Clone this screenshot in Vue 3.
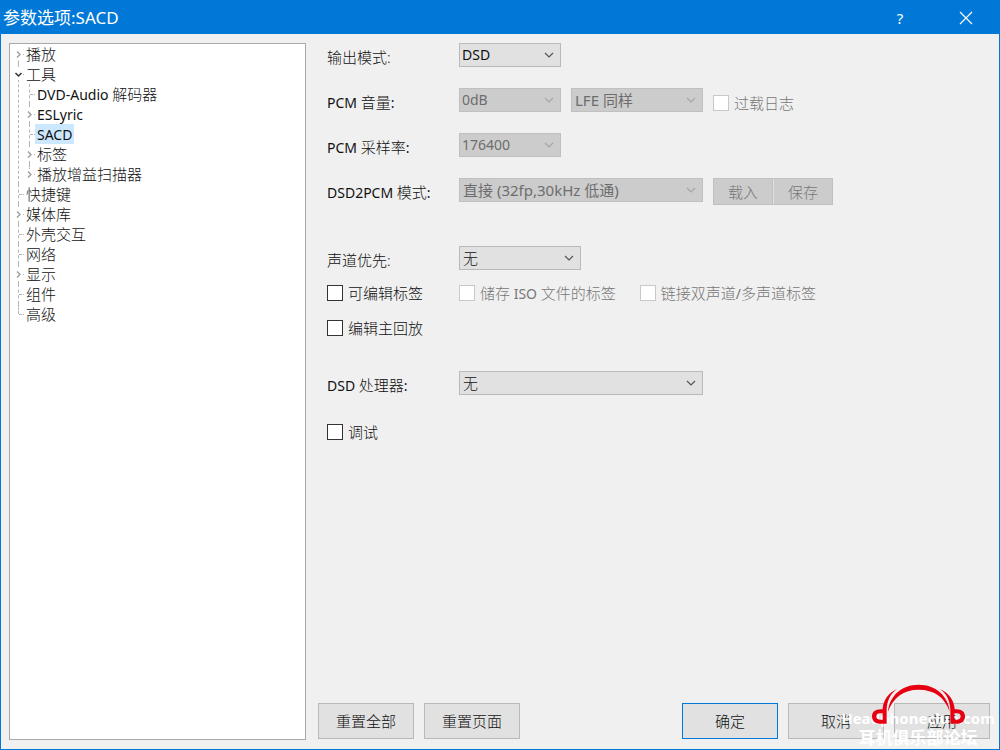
<template>
  <div class="window">
    <header class="titlebar">
      <h1>参数选项:SACD</h1>
      <button class="sys" type="button" aria-label="帮助">?</button>
      <button class="sys" type="button" aria-label="关闭">
        <svg width="14" height="14" viewBox="0 0 14 14">
          <path d="M1 1L13 13M13 1L1 13" stroke="#fff" stroke-width="1.2" fill="none" />
        </svg>
      </button>
    </header>

    <main class="body">
      <nav class="tree">
        <ul>
          <li v-for="item in tree" :key="item.name">
            <button type="button" class="node" @click="selected = item.name">
              <svg class="twisty" width="14" height="20" viewBox="0 0 14 20">
                <path class="stub" d="M9 10.5H14" />
                <rect v-if="item.state" x="4" y="5" width="8" height="11" fill="#fff" />
                <path v-if="item.state === 'closed'" class="closed" d="M7 7.5L10 10.5L7 13.5" />
                <path v-if="item.state === 'open'" class="open" d="M5.5 9L8.5 12L11.5 9" />
              </svg>
              <span class="name" :class="{ active: selected === item.name }"
                ><MixedText :text="item.name"
              /></span>
            </button>
            <ul v-if="item.children">
              <li v-for="child in item.children" :key="child.name">
                <button type="button" class="node" @click="selected = child.name">
                  <svg class="twisty" width="14" height="20" viewBox="0 0 14 20">
                    <path class="stub" d="M9 10.5H14" />
                    <rect v-if="child.state" x="4" y="5" width="8" height="11" fill="#fff" />
                    <path v-if="child.state" class="closed" d="M7 7.5L10 10.5L7 13.5" />
                  </svg>
                  <span class="name" :class="{ active: selected === child.name }"
                    ><MixedText :text="child.name"
                  /></span>
                </button>
              </li>
            </ul>
          </li>
        </ul>
      </nav>

      <section class="panel">
        <form class="form" @submit.prevent>
          <div class="row">
            <label class="caption" for="output">输出模式:</label>
            <span class="combo short">
              <select id="output">
                <option>DSD</option>
              </select>
              <svg viewBox="0 0 10 6"><path d="M1 1L5 5L9 1" /></svg>
            </span>
          </div>
          <div class="row">
            <label class="caption" for="volume"><MixedText text="PCM 音量:" /></label>
            <span class="combo short">
              <select id="volume" disabled>
                <option>0dB</option>
              </select>
              <svg viewBox="0 0 10 6"><path d="M1 1L5 5L9 1" /></svg>
            </span>
            <span class="combo lfe">
              <select aria-label="LFE" disabled>
                <option>LFE 同样</option>
              </select>
              <svg viewBox="0 0 10 6"><path d="M1 1L5 5L9 1" /></svg>
            </span>
            <label class="check off low"><input type="checkbox" disabled />过载日志</label>
          </div>
          <div class="row">
            <label class="caption" for="rate"><MixedText text="PCM 采样率:" /></label>
            <span class="combo short">
              <select id="rate" disabled>
                <option>176400</option>
              </select>
              <svg viewBox="0 0 10 6"><path d="M1 1L5 5L9 1" /></svg>
            </span>
          </div>
          <div class="row">
            <label class="caption" for="convert"><MixedText text="DSD2PCM 模式:" /></label>
            <span class="combo long">
              <select id="convert" disabled>
                <option>直接 (32fp,30kHz 低通)</option>
              </select>
              <svg viewBox="0 0 10 6"><path d="M1 1L5 5L9 1" /></svg>
            </span>
            <div class="pair">
              <button type="button" disabled>载入</button>
              <button type="button" disabled>保存</button>
            </div>
          </div>

          <div class="row group">
            <label class="caption" for="area">声道优先:</label>
            <span class="combo medium">
              <select id="area">
                <option>无</option>
              </select>
              <svg viewBox="0 0 10 6"><path d="M1 1L5 5L9 1" /></svg>
            </span>
          </div>
          <div class="row tight">
            <label class="check first"><input type="checkbox" />可编辑标签</label>
            <label class="check off"
              ><input type="checkbox" disabled /><MixedText text="储存 ISO 文件的标签"
            /></label>
            <label class="check off linked"
              ><input type="checkbox" disabled /><MixedText text="链接双声道/多声道标签"
            /></label>
          </div>
          <div class="row tight">
            <label class="check first"><input type="checkbox" />编辑主回放</label>
          </div>

          <div class="row processor">
            <label class="caption" for="processor"><MixedText text="DSD 处理器:" /></label>
            <span class="combo long">
              <select id="processor">
                <option>无</option>
              </select>
              <svg viewBox="0 0 10 6"><path d="M1 1L5 5L9 1" /></svg>
            </span>
          </div>
          <div class="row debug">
            <label class="check first"><input type="checkbox" />调试</label>
          </div>
        </form>

        <footer class="actions">
          <button type="button">重置全部</button>
          <button type="button">重置页面</button>
          <button type="button" class="default">确定</button>
          <button type="button">取消</button>
          <button type="button">应用</button>
        </footer>
      </section>
    </main>

    <div class="watermark">
      <svg width="97" height="42" viewBox="150 40 291 126">
        <path
          fill="#e60012"
          d="M204 126C208 78 246 45 296 45C346 45 385 78 389 126C374 82 342 60 296 60C250 60 219 84 204 126Z"
        />
        <path
          fill="#e60012"
          d="M231 58C205 70 189 92 188 119C166 117 156 127 156 140C156 154 165 162 179 162H200V119C201 93 211 73 231 58ZM188 131V150H180C172 150 169 146 169 140C169 134 174 131 180 131Z"
          fill-rule="evenodd"
        />
        <path
          fill="#e60012"
          d="M360 58C386 70 403 92 404 119C425 117 435 127 435 140C435 154 426 162 413 162H391V119C390 93 380 73 360 58ZM403 131V150H411C419 150 422 146 422 140C422 134 418 131 411 131Z"
          fill-rule="evenodd"
        />
      </svg>
      <span class="site">Headphoneclub.com</span>
      <span class="club">耳机俱乐部论坛</span>
    </div>
  </div>
</template>

<script setup>
import { h, ref } from 'vue'

const selected = ref('SACD')

const tree = [
  { name: '播放', state: 'closed' },
  {
    name: '工具',
    state: 'open',
    children: [
      { name: 'DVD-Audio 解码器' },
      { name: 'ESLyric', state: 'closed' },
      { name: 'SACD' },
      { name: '标签', state: 'closed' },
      { name: '播放增益扫描器', state: 'closed' },
    ],
  },
  { name: '快捷键' },
  { name: '媒体库', state: 'closed' },
  { name: '外壳交互' },
  { name: '网络' },
  { name: '显示', state: 'closed' },
  { name: '组件' },
  { name: '高级' },
]

// latin runs are set smaller and a bit heavier than the chinese text
const MixedText = (props) =>
  h(
    'span',
    { class: 'mixed' },
    props.text
      .split(/([\x20-\x7e]+)/)
      .filter(Boolean)
      .map((run) => (/[\x20-\x7e]/.test(run) ? h('span', { class: 'latin' }, run) : run))
  )
MixedText.props = ['text']
</script>

<style>
body {
  margin: 0;
}

.mixed {
  white-space: pre;
}

.mixed .latin {
  font-size: 14px;
  font-weight: 400;
}
</style>

<style scoped>
.window {
  position: relative;
  box-sizing: border-box;
  min-height: 100vh;
  display: flex;
  flex-direction: column;
  border: 1px solid #0078d7;
  background: #f0f0f0;
  color: #111;
  font-family: 'Noto Sans', 'Noto Sans CJK SC', sans-serif;
  font-size: 15px;
  font-weight: 300;
  line-height: 20px;
}

button,
select,
input {
  margin: 0;
  font: inherit;
  color: inherit;
}

.titlebar {
  display: flex;
  align-items: center;
  height: 33px;
  padding-left: 2px;
  background: #0078d7;
  color: #fff;
}

.titlebar h1 {
  flex: 1;
  margin: 0;
  font-size: 17px;
  font-weight: 400;
}

.sys {
  display: flex;
  align-items: center;
  justify-content: center;
  width: 66px;
  height: 32px;
  padding: 0;
  border: 0;
  background: none;
  font-weight: 400;
}

.body {
  flex: 1;
  display: flex;
  gap: 12px;
  padding: 9px 9px 9px 8px;
}

/* tree */
.tree {
  box-sizing: border-box;
  flex: 0 0 297px;
  border: 1px solid #a5a8ad;
  background: #fff;
}

.tree ul {
  margin: 0;
  padding: 0;
  list-style: none;
}

.tree ul ul {
  padding-left: 11px;
}

.tree li {
  position: relative;
}

.tree li::before {
  content: '';
  position: absolute;
  left: 8px;
  top: 0;
  bottom: 0;
  border-left: 1px dashed #b4b4b4;
}

.tree > ul > li:first-child::before {
  top: 10px;
}

.tree li:last-child::before {
  bottom: auto;
  height: 10px;
}

.node {
  position: relative;
  display: flex;
  height: 20px;
  padding: 0;
  border: 0;
  background: none;
}

.twisty path {
  fill: none;
}

.twisty .stub {
  stroke: #b4b4b4;
  stroke-dasharray: 3 1;
}

.twisty .closed {
  stroke: #9a9a9a;
  stroke-width: 1.3;
}

.twisty .open {
  stroke: #333;
  stroke-width: 1.5;
}

.name {
  padding: 0 2px;
}

.name.active {
  background: #cce8ff;
}

/* settings */
.panel {
  flex: 1;
  display: flex;
  flex-direction: column;
  justify-content: space-between;
}

.form {
  padding-left: 9px;
}

.row {
  display: flex;
  height: 24px;
  margin-bottom: 21px;
}

.row.group {
  margin-top: 44px;
}

.row.group,
.row.tight {
  margin-bottom: 11px;
}

.row.processor {
  margin-top: 31px;
  margin-bottom: 25px;
}

.caption {
  width: 132px;
  padding-top: 4px;
}

.combo {
  position: relative;
  height: 24px;
  margin-right: 10px;
}

.combo.short {
  width: 102px;
}

.combo.medium {
  width: 122px;
}

.combo.lfe {
  width: 132px;
}

.combo.long {
  width: 244px;
}

.combo select {
  display: block;
  box-sizing: border-box;
  width: 100%;
  height: 24px;
  padding: 0 3px;
  border: 1px solid #b9b9b9;
  border-radius: 0;
  background: #e1e1e1;
  appearance: none;
  opacity: 1;
}

.combo.short select {
  padding: 0 2px;
  font-size: 14px;
  font-weight: 400;
}

.combo select:disabled {
  border-color: #c0c0c0;
  background: #ccc;
  color: #6d6d6d;
  font-weight: 400;
}

.combo svg {
  position: absolute;
  right: 7px;
  top: 9px;
  width: 10px;
  height: 6px;
  fill: none;
  stroke: #555;
  stroke-width: 1.2;
  pointer-events: none;
}

.combo select:disabled + svg {
  stroke: #a6a6a6;
}

.check {
  display: flex;
  align-items: center;
  gap: 5px;
}

.check.first {
  width: 132px;
}

.check.low {
  padding-top: 6px;
}

.check.linked {
  margin-left: 24px;
}

.check.off {
  color: #777;
}

.check input {
  appearance: none;
  box-sizing: border-box;
  width: 16px;
  height: 16px;
  border: 1px solid #333;
  background: #fff;
}

.check input:checked {
  background: #333;
}

.check input:disabled {
  border-color: #c8c8c8;
}

.pair {
  display: flex;
}

.pair button {
  width: 60px;
  height: 27px;
  padding: 0;
  border: 1px solid #c0c0c0;
  background: #ccc;
  color: #777;
}

.pair button + button {
  border-left-color: #e0e0e0;
}

.actions {
  display: flex;
  gap: 10px;
  padding-bottom: 1px;
}

.actions button {
  width: 96px;
  height: 36px;
  padding: 0;
  border: 1px solid #b9b9b9;
  background: #e1e1e1;
}

.actions .default {
  margin-left: auto;
  border-color: #0078d7;
}

/* site mark over the lower right corner */
.watermark {
  position: absolute;
  right: 4px;
  bottom: 1px;
  width: 154px;
  display: flex;
  flex-direction: column;
  align-items: center;
  color: #fff;
  font-weight: 700;
  white-space: nowrap;
  pointer-events: none;
}

.watermark svg {
  position: relative;
  z-index: 1;
  margin-bottom: -17px;
}

.site {
  font-size: 15px;
  line-height: 20px;
}

.club {
  font-size: 17px;
  line-height: 20px;
}
</style>
